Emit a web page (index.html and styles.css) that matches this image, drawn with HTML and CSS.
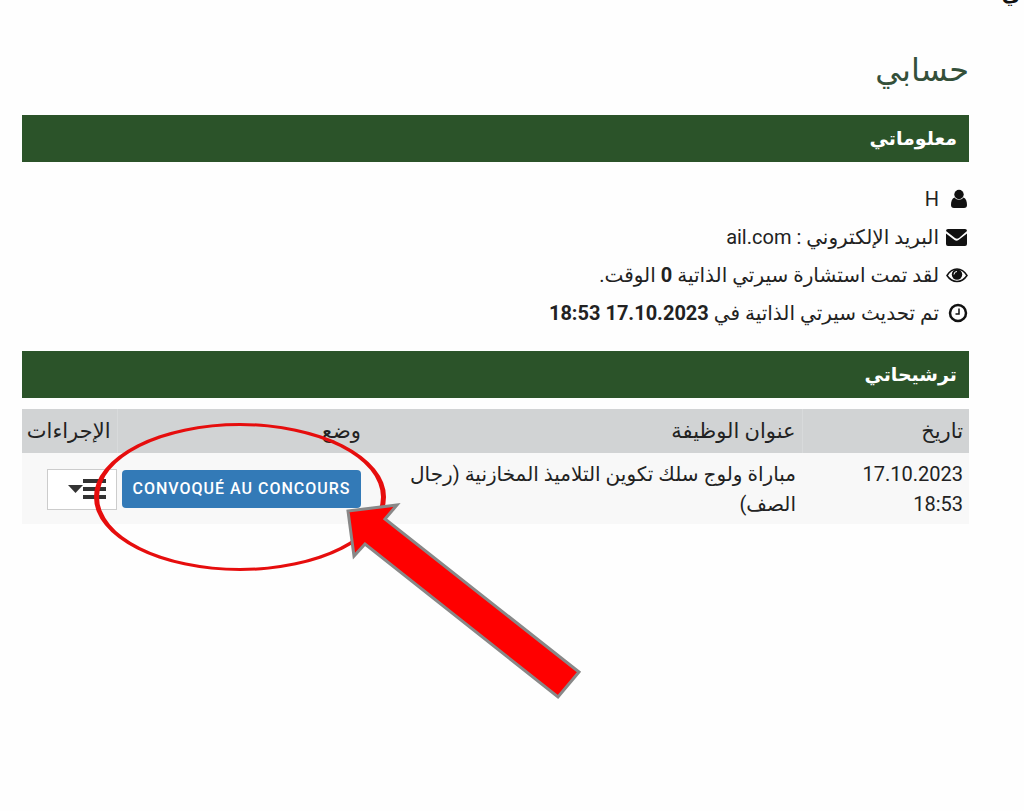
FILE: index.html
```html
<!DOCTYPE html>
<html lang="ar" dir="rtl">
<head>
  <meta charset="UTF-8" />
  <meta name="viewport" content="width=device-width, initial-scale=1.0"/>
  <title>حسابي</title>
  <link rel="stylesheet" href="styles.css">
</head>
<body>
  <header class="topbar"><span>ي</span></header>

  <main class="container">
    <h1>حسابي</h1>

    <h2 class="bar">معلوماتي</h2>
    <ul class="info">
      <li>
        <svg class="icon" viewBox="0 0 22 22"><circle cx="12" cy="6.500" r="4.700"/><path d="M7.500 9.500C5 10.500 4 13.500 4 17c0 2 1 3 3 3h10c2 0 3-1 3-3 0-3.500-1-6.500-3.500-7.500-2.500 3-6.500 3-9 0z"/></svg>
        <span>H</span>
      </li>
      <li>
        <svg class="icon" viewBox="0 0 22 22"><path d="M1 3h17q2 0 2 2L12 12q-2 1.500-4 0L-1 5q0-2 2-2zM-1 7.500l8.500 6.500q2 1.500 4 0L20 7.500V18q0 2-2 2H1q-2 0-2-2z"/></svg>
        <span>البريد الإلكتروني : <span dir="ltr">ail.com</span></span>
      </li>
      <li>
        <svg class="icon" viewBox="0 0 22 22"><path class="line" d="M0 11.500Q4 5 10 5t10 6.500Q16 17.500 10 17.500T0 11.500z"/><circle cx="10" cy="10.500" r="5.200"/><path class="glint" d="M7 10.500q0-3 3-3"/></svg>
        <span>لقد تمت استشارة سيرتي الذاتية <b>0</b> الوقت.</span>
      </li>
      <li>
        <svg class="icon" viewBox="0 0 22 22"><circle class="ring" cx="11" cy="11" r="8"/><path class="hands" d="M12 6.500V12H8.500"/></svg>
        <span>تم تحديث سيرتي الذاتية في <b dir="ltr">18:53 17.10.2023</b></span>
      </li>
    </ul>

    <h2 class="bar">ترشيحاتي</h2>
    <div class="applications">
      <table>
        <thead>
          <tr>
            <th class="date">تاريخ</th>
            <th class="job">عنوان الوظيفة</th>
            <th class="status">وضع</th>
            <th class="actions">الإجراءات</th>
          </tr>
        </thead>
        <tbody>
          <tr>
            <td>17.10.2023 18:53</td>
            <td>مباراة ولوج سلك تكوين التلاميذ المخازنية (رجال الصف)</td>
            <td class="middle"><span class="label" dir="ltr">CONVOQUÉ AU CONCOURS</span></td>
            <td class="middle menu-cell">
              <button class="menu-btn" type="button" aria-label="الإجراءات">
                <svg viewBox="0 0 38 20"><path d="M0 6h15l-7.500 8z"/><path class="lines" d="M15 2h23M15 10h23M15 18h23"/></svg>
              </button>
            </td>
          </tr>
        </tbody>
      </table>

      <!-- highlight around the status -->
      <svg class="pointer" viewBox="0 0 500 290" aria-hidden="true">
        <path class="ellipse" fill-rule="evenodd" d="M72 88A146 74 0 0 1 364 88A146 74 0 0 1 72 88zM77 88A141 71 0 0 0 359 88A141 71 0 0 0 77 88z"/>
        <path class="arrow" d="M326 102L375 96L363 110L557 263L536 288L343 135L332 147z"/>
      </svg>
    </div>
  </main>
</body>
</html>
```
FILE: styles.css
```css
* {
  box-sizing: border-box;
  margin: 0;
  padding: 0;
}

body {
  background: #fefefe;
  color: #222;
  font-family: Roboto, "DejaVu Sans", sans-serif;
  font-size: 20px;
  line-height: 30px;
}

.topbar {
  display: flex;
  align-items: flex-end;
  height: 6px;
  padding: 0 4px;
  overflow: hidden;
  color: #111;
  font-weight: bold;
  line-height: 24px;
}

.container {
  padding: 42px 55px 0 22px;
}

h1 {
  color: #34503a;
  font-size: 32px;
  font-weight: normal;
  line-height: 44px;
  margin-bottom: 23px;
}

.bar {
  background: #2b5329;
  color: #fff;
  font-size: 19px;
  line-height: 47px;
  padding: 0 12px;
}

.info {
  list-style: none;
  padding: 18px 0 19px;
}

.info li {
  display: flex;
  align-items: center;
  gap: 8px;
  height: 38px;
}

.icon {
  width: 22px;
  height: 22px;
  flex: none;
  fill: #111;
  overflow: visible;
}

.icon .line,
.icon .ring,
.icon .hands,
.icon .glint {
  fill: none;
  stroke: #111;
  stroke-width: 1.5;
}

.icon .ring {
  stroke-width: 2.5;
}

.icon .glint {
  stroke: #fff;
  stroke-width: 1;
}

.applications {
  position: relative;
  margin-top: 11px;
  padding-bottom: 176px;
}

table {
  width: 100%;
  table-layout: fixed;
  border-collapse: collapse;
}

th,
td {
  padding: 6px;
  text-align: right;
}

td {
  background: #f8f8f8;
  padding-bottom: 5px;
  vertical-align: top;
}

th {
  background: #d1d3d4;
  font-size: 21px;
  font-weight: normal;
  height: 44px;
  vertical-align: middle;
}

.job,
.actions {
  border-right: 1px solid #d8dadb;
}

.date {
  width: 167px;
}

.status {
  width: 250px;
}

.actions {
  width: 95px;
}

td.middle {
  vertical-align: middle;
}

td.menu-cell {
  padding-right: 0;
}

.label {
  display: block;
  width: 239px;
  background: #337ab7;
  border-radius: 4px;
  color: #fff;
  font-size: 16px;
  font-weight: 500;
  letter-spacing: 1px;
  line-height: 38px;
  text-align: center;
  white-space: nowrap;
}

.menu-btn {
  display: flex;
  align-items: center;
  justify-content: flex-start;
  width: 70px;
  height: 41px;
  padding: 0 10px;
  background: #fff;
  border: 1px solid #ccc;
  cursor: pointer;
}

.menu-btn svg {
  width: 38px;
  height: 20px;
  fill: #333;
}

.menu-btn .lines {
  stroke: #333;
  stroke-width: 4;
}

.pointer {
  position: absolute;
  top: 0;
  left: 0;
  width: 500px;
  height: 290px;
  overflow: visible;
  pointer-events: none;
}

.ellipse {
  fill: #e60d0d;
}

.arrow {
  fill: #f00;
  stroke: #888;
  stroke-width: 3;
}
```
